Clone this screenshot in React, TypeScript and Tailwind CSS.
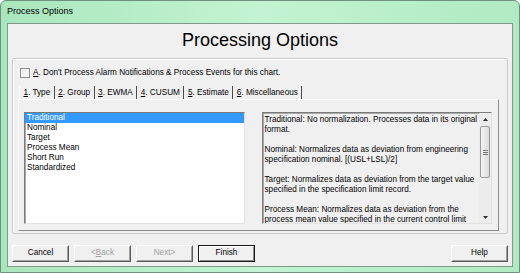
const listItems = ["Traditional", "Nominal", "Target", "Process Mean", "Short Run", "Standardized"]

const tabs = [
    { key: "1", label: "Type" },
    { key: "2", label: "Group" },
    { key: "3", label: "EWMA" },
    { key: "4", label: "CUSUM" },
    { key: "5", label: "Estimate" },
    { key: "6", label: "Miscellaneous" },
]

const descriptions = [
    "Traditional: No normalization. Processes data in its original format.",
    "Nominal: Normalizes data as deviation from engineering specification nominal. [(USL+LSL)/2]",
    "Target: Normalizes data as deviation from the target value specified in the specification limit record.",
    "Process Mean: Normalizes data as deviation from the process mean value specified in the current control limit",
]

function Button({ children, disabled, primary }: { children: React.ReactNode; disabled?: boolean; primary?: boolean }) {
    return (
        <div
            className={`flex h-[17px] w-[57px] items-center justify-center bg-[#f0f0f0] text-[8.2px] ${
                primary ? "border border-[#1a1a1a]" : "border border-t-white border-l-white border-r-[#5a5a5a] border-b-[#5a5a5a]"
            } ${disabled ? "text-[#a0a0a0]" : "text-black"}`}
        >
            <div
                className={`flex h-full w-full items-center justify-center ${
                    primary ? "border border-t-white border-l-white border-r-[#8a8a8a] border-b-[#8a8a8a]" : "border border-transparent border-r-[#a0a0a0] border-b-[#a0a0a0]"
                }`}
            >
                {children}
            </div>
        </div>
    )
}

export default function App() {
    return (
        <div
            className="flex h-[273px] w-[520px] flex-col overflow-hidden rounded-t-[6px] border border-[#6e927b] bg-linear-to-r from-[#a9e6bd] via-[#c3f3d2] to-[#b0eac3] px-[6px]"
            style={{ fontFamily: '"Liberation Sans", Arial, sans-serif' }}
        >
            {/* title bar */}
            <div className="flex h-[22px] shrink-0 items-center text-[9px] text-black">Process Options</div>

            {/* client area */}
            <div className="flex h-[244px] shrink-0 flex-col border border-[#7f9c8a] bg-[#f0f0f0]">
                <div className="flex h-[34px] items-start justify-center pt-[6px] text-[18px] leading-[20px] text-black">
                    Processing Options
                </div>

                {/* group box */}
                <div className="mx-[4px] flex h-[176px] flex-col rounded-[2px] border border-[#c9cbcd] pt-[9px] shadow-[inset_1px_1px_0_#ffffff]">
                    <div className="flex h-[10px] items-center gap-[3px] pl-[7px] text-[8.2px] leading-[10px] text-black">
                        <div className="h-[10px] w-[10px] border border-[#8e8f8f] bg-linear-to-br from-[#e6e6e6] to-white shadow-[inset_0_0_0_1px_#f4f4f4]" />
                        <span>
                            <span className="underline">A</span>. Don't Process Alarm Notifications &amp; Process Events for this chart.
                        </span>
                    </div>

                    {/* tabs */}
                    <div className="mt-[8px] ml-[6px] flex h-[13px] items-stretch text-[8.2px] leading-[13px] text-black">
                        {tabs.map((t, i) => (
                            <div
                                key={t.key}
                                className={`border-r border-[#4a4a4a] px-[3.5px] ${i == 0 ? "border-l border-l-white" : ""}`}
                            >
                                <span className="underline">{t.key}</span>. {t.label}
                            </div>
                        ))}
                    </div>

                    {/* tab panel */}
                    <div className="ml-[5px] mr-[8px] flex h-[132px] gap-[17px] border border-t-white border-l-white border-r-[#8c8c8c] border-b-[#8c8c8c] pt-[12px] pl-[5px] pr-[6px] pb-[6px]">
                        <div className="h-[112px] w-[221px] border border-t-[#7b7b7b] border-l-[#7b7b7b] border-r-[#e2e2e2] border-b-[#e2e2e2] bg-white shadow-[inset_1px_1px_0_#a8a8a8]">
                            {listItems.map((item, i) => (
                                <div
                                    key={i}
                                    className={`h-[10px] pl-[2px] text-[8.2px] leading-[10px] ${i == 0 ? "bg-[#3399ff] text-white" : "text-black"}`}
                                >
                                    {item}
                                </div>
                            ))}
                        </div>

                        <div className="flex h-[112px] w-[231px] border border-t-[#7b7b7b] border-l-[#7b7b7b] border-r-[#e2e2e2] border-b-[#e2e2e2] bg-[#f0f0f0] shadow-[inset_1px_1px_0_#a8a8a8]">
                            <div className="flex-1 overflow-hidden pt-[2px] pl-[2px] text-[8.2px] leading-[10px] text-black">
                                {descriptions.map((d, i) => (
                                    <p key={i} className={i < descriptions.length - 1 ? "mb-[10px]" : ""}>
                                        {d}
                                    </p>
                                ))}
                            </div>

                            {/* scrollbar */}
                            <div className="flex w-[12px] shrink-0 flex-col items-center bg-[#ececec]">
                                <div className="flex h-[12px] w-full items-center justify-center">
                                    <svg width="5" height="3" viewBox="0 0 5 3">
                                        <path d="M2.5 0 L5 3 L0 3 Z" fill="#303030" />
                                    </svg>
                                </div>
                                <div className="mt-[1px] flex h-[52px] w-[10px] items-center justify-center rounded-[2px] border border-[#9a9a9a] bg-linear-to-r from-[#f3f3f3] to-[#dcdcdc]">
                                    <div className="flex flex-col gap-[1px]">
                                        <div className="h-px w-[5px] bg-[#7a7a7a]" />
                                        <div className="h-px w-[5px] bg-[#7a7a7a]" />
                                        <div className="h-px w-[5px] bg-[#7a7a7a]" />
                                    </div>
                                </div>
                                <div className="flex-1" />
                                <div className="flex h-[12px] w-full items-center justify-center">
                                    <svg width="5" height="3" viewBox="0 0 5 3">
                                        <path d="M0 0 L5 0 L2.5 3 Z" fill="#303030" />
                                    </svg>
                                </div>
                            </div>
                        </div>
                    </div>
                </div>

                {/* buttons */}
                <div className="mt-[11px] flex items-center px-[4px]">
                    <div className="flex gap-[5px]">
                        <Button>Cancel</Button>
                        <Button disabled>
                            &lt;<span className="underline">B</span>ack
                        </Button>
                        <Button disabled>Next&gt;</Button>
                        <Button primary>Finish</Button>
                    </div>
                    <div className="flex-1" />
                    <Button>Help</Button>
                </div>
            </div>
        </div>
    )
}
